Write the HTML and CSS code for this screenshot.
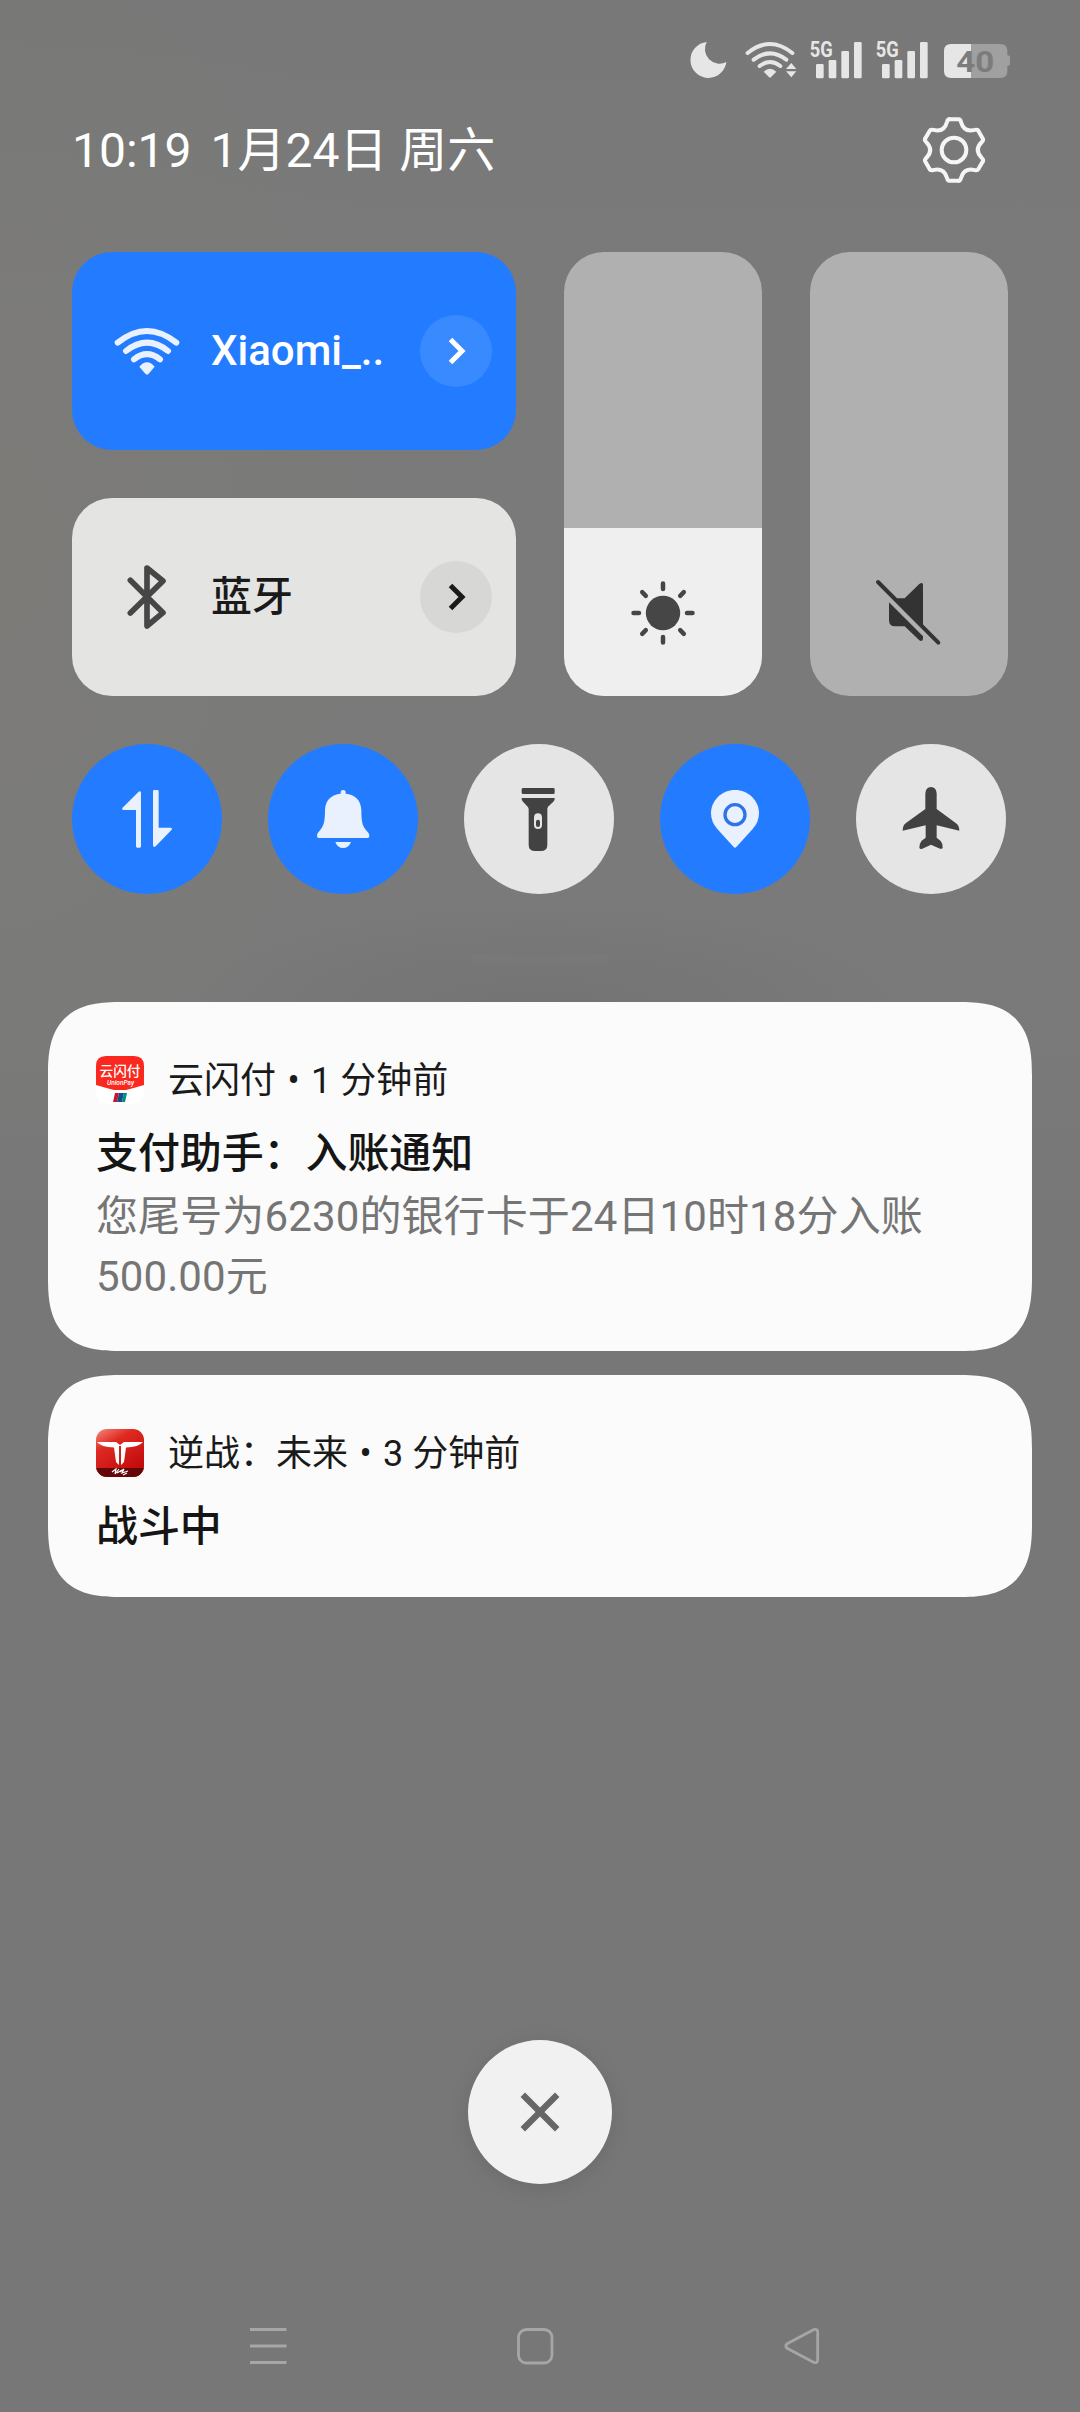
FILE: index.html
```html
<!DOCTYPE html>
<html lang="zh-CN">
<head>
<meta charset="utf-8">
<title>控制中心</title>
<link rel="stylesheet" href="styles.css">
</head>
<body>
<main class="shade">
  <div class="status">
    <svg class="st-moon" width="40" height="40" viewBox="56 60 120 120"><path fill="#e6e6e6" d="M112 66A54 54 0 1 0 171 126A44 44 0 0 1 112 66Z"/></svg>
    <svg class="st-wifi" width="56" height="40" viewBox="222 60 168 120">
      <g fill="none" stroke="#e6e6e6" stroke-width="12" stroke-linecap="round"><path d="M233 99Q300 45 367 99"/><path d="M251 119Q300 81 349 119"/><path d="M269 138Q300 114 331 138"/></g>
      <path fill="#e6e6e6" d="M281 155Q300 138 319 155L300 174ZM348 147H379L364 129ZM348 154H379L364 172Z"/>
    </svg>
    <svg class="st-signal" width="54" height="48" viewBox="417 36 162 144">
      <text class="net" x="419" y="110" textLength="69" lengthAdjust="spacingAndGlyphs">5G</text>
      <g fill="#e6e6e6"><rect x="438" y="132" width="23" height="43" rx="4"/><rect x="476" y="120" width="23" height="55" rx="4"/><rect x="514" y="93" width="23" height="82" rx="4"/><rect x="552" y="66" width="23" height="109" rx="4"/></g>
    </svg>
    <svg class="st-signal" width="54" height="48" viewBox="417 36 162 144">
      <text class="net" x="419" y="110" textLength="69" lengthAdjust="spacingAndGlyphs">5G</text>
      <g fill="#e6e6e6"><rect x="438" y="132" width="23" height="43" rx="4"/><rect x="476" y="120" width="23" height="55" rx="4"/><rect x="514" y="93" width="23" height="82" rx="4"/><rect x="552" y="66" width="23" height="109" rx="4"/></g>
    </svg>
    <svg class="st-battery" width="68" height="40" viewBox="819 60 204 120">
      <path fill="#a0a0a0" d="M903 72H991Q1012 72 1012 93V106Q1020 106 1020 112V132Q1020 138 1012 138V153Q1012 174 991 174H903Z"/>
      <path fill="#e6e6e6" d="M903 72V174H843Q822 174 822 153V93Q822 72 843 72Z"/>
      <text class="level" x="859" y="156" textLength="114" lengthAdjust="spacingAndGlyphs">40</text>
    </svg>
  </div>

  <header class="head">
    <div class="clock"><span>10:19</span><span>1月24日 周六</span></div>
    <svg width="66" height="66" viewBox="-99 -99 198 198">
      <defs><path id="tooth" d="M-14-92H14Q19-92 21-84C27-62 40.2-54.4 62.2-60.2Q70.2-62.5 72.7-58.1"/></defs>
      <g fill="none" stroke="#f5f5f5" stroke-width="12" stroke-linecap="round">
        <use href="#tooth"/><use href="#tooth" transform="rotate(60)"/><use href="#tooth" transform="rotate(120)"/><use href="#tooth" transform="rotate(180)"/><use href="#tooth" transform="rotate(240)"/><use href="#tooth" transform="rotate(300)"/>
        <circle r="37"/>
      </g>
    </svg>
  </header>

  <section class="controls">
    <div class="tiles">
      <div class="tile tile-on">
        <svg width="72" height="72" viewBox="153 225 216 216">
          <g fill="none" stroke="#e9f1ff" stroke-width="18" stroke-linecap="round"><path d="M173 308Q261 238 349 308"/><path d="M198 333Q261 283 324 333"/><path d="M222 358Q261 327 300 358"/></g>
          <path fill="#e9f1ff" d="M238 380Q261 354 284 380L266 401Q261 406 256 401Z"/>
        </svg>
        <span class="tile-name">Xiaomi_..</span>
        <span class="more"><svg width="36" height="36" viewBox="-18 -18 36 36"><path fill="none" stroke="#fff" stroke-width="5" d="M-5.500-11.500L6 0L-5.500 11.500"/></svg></span>
      </div>
      <div class="tile tile-off">
        <svg width="72" height="72" viewBox="153 963 216 216">
          <path fill="none" stroke="#464646" stroke-width="17" stroke-linecap="round" stroke-linejoin="round" d="M211 1021L309 1118L261 1158V984L309 1023L211 1119"/>
        </svg>
        <span class="tile-name cjk">蓝牙</span>
        <span class="more"><svg width="36" height="36" viewBox="-18 -18 36 36"><path fill="none" stroke="#1a1a1a" stroke-width="5" d="M-5.500-11.500L6 0L-5.500 11.500"/></svg></span>
      </div>
    </div>
    <div class="slider">
      <div class="slider-fill">
        <svg width="72" height="72" viewBox="-36 -36 72 72">
          <circle r="17.200" fill="#464646"/>
          <path stroke="#464646" stroke-width="4.500" stroke-linecap="round" d="M0-29.500V-24M0 24V29.500M-29.500 0H-24M24 0H29.500M-20.800-20.800L-17.200-17.200M20.800-20.800L17.200-17.200M-20.800 20.800L-17.200 17.200M20.800 20.800L17.200 17.200"/>
        </svg>
      </div>
    </div>
    <div class="slider">
      <svg class="mute" width="72" height="72" viewBox="969 1010 216 216">
        <path stroke="#333" stroke-width="12" stroke-linecap="round" d="M984 1025L1165 1207"/>
        <path fill="#333" d="M1037 1074H1064L1107 1032Q1119 1023 1119 1034V1158ZM1017 1086L1119 1188V1196Q1117 1205 1108 1200L1064 1158H1035Q1017 1158 1017 1140Z"/>
      </svg>
    </div>
  </section>

  <section class="toggles">
    <div class="toggle on"><svg viewBox="36 42 450 450"><path d="M243 188V349Q243 353 239 353H232Q228 353 228 349V240H190Q184 239 187 234L236 185Q242 181 243 188ZM283 180H292Q296 180 296 184V293H333Q338 295 335 299L287 349Q280 354 279 346V184Q279 180 283 180Z"/></svg></div>
    <div class="toggle on"><svg viewBox="624 42 450 450"><path d="M842 191V187Q842 180 849 180Q857 180 857 187V191C885 193 903 211 904 240C904 280 908 291 925 308Q928 312 928 319Q928 324 923 324H776Q771 324 771 319Q771 312 774 308C790 291 795 280 795 240C796 211 814 193 842 191ZM826 336H873Q866 354 849 354Q833 354 826 336Z"/></svg></div>
    <div class="toggle"><svg viewBox="1212 42 450 450"><path fill-rule="evenodd" d="M1389 174H1480Q1484 174 1484 178V188Q1484 192 1480 192H1389Q1385 192 1385 188V178Q1385 174 1389 174ZM1385 204H1484Q1485 210 1480 215L1464 230Q1462 233 1462 238V344Q1462 363 1442 363H1426Q1406 363 1406 344V238Q1406 233 1403 230L1389 215Q1384 210 1385 204ZM1422 263V284Q1422 297 1434 297Q1446 297 1446 284V263Q1446 250 1434 250Q1422 250 1422 263Z"/><rect x="1428" y="269" width="12" height="22" rx="6"/></svg></div>
    <div class="toggle on"><svg viewBox="360 42 450 450"><path d="M585 180C624 180 657 211 657 250Q657 276 638 297L589 351Q585 355 581 351L532 297Q513 276 513 250C513 211 546 180 585 180Z"/><circle cx="585" cy="254" r="30" fill="none" stroke="#2e74e8" stroke-width="10"/></svg></div>
    <div class="toggle"><svg viewBox="948 42 450 450"><path d="M1156 190Q1158 171 1173 171Q1188 171 1190 190V237L1248 280Q1258 287 1258 302L1190 286V323L1202 333Q1209 341 1208 353Q1206 358 1200 356L1173 344L1147 356Q1140 359 1138 353Q1137 342 1145 332L1157 323V286L1088 302Q1088 286 1098 279L1156 237Z"/></svg></div>
  </section>

  <div class="handle"></div>

  <article class="card">
    <div class="card-head">
      <svg width="48" height="48" viewBox="0 0 48 48">
        <rect width="48" height="48" rx="10" fill="#fff"/>
        <path fill="#fb281f" d="M0 10Q0 0 10 0H38Q48 0 48 10V29Q38 32 30 34H18Q10 32 0 29Z"/>
        <text class="logo-cn" x="3.500" y="19.500" textLength="41" lengthAdjust="spacingAndGlyphs">云闪付</text>
        <text class="logo-en" x="11" y="28.500" textLength="27">UnionPay</text>
        <path fill="#c5172e" d="M19 37H23L21 46H17Z"/><path fill="#164e8c" d="M23 37H28L26 46H21Z"/><path fill="#008b80" d="M28 37H31L29 46H26Z"/>
      </svg>
      <p class="app">云闪付 <span class="dot">•</span> 1 分钟前</p>
    </div>
    <h2 class="title">支付助手：入账通知</h2>
    <p class="text">您尾号为6230的银行卡于24日10时18分入账<br>500.00元</p>
  </article>

  <article class="card card-short">
    <div class="card-head">
      <svg width="48" height="48" viewBox="0 0 48 48">
        <defs>
          <linearGradient id="red" x1="0" y1="0" x2=".6" y2="1"><stop offset="0" stop-color="#f58a7c"/><stop offset=".35" stop-color="#df2a22"/><stop offset="1" stop-color="#c00a0c"/></linearGradient>
          <clipPath id="round"><rect width="48" height="48" rx="11"/></clipPath>
        </defs>
        <g clip-path="url(#round)"><rect width="48" height="48" fill="url(#red)"/><rect y="39" width="48" height="9" fill="#650608"/></g>
        <path fill="#fff" d="M1 13H20L24 16L28 13H47Q43 18 30 18.500L28 33L25 36V17H23V36L20 33L18 18.500Q5 18 1 13Z"/>
        <path fill="none" stroke="#fff" stroke-width="1.200" d="M16 43L20 40L19 45L23 40M21 44L26 41M24 43L28 40L26 44L32 42M27 46L31 44"/>
      </svg>
      <p class="app">逆战：未来 <span class="dot">•</span> 3 分钟前</p>
    </div>
    <h2 class="title">战斗中</h2>
  </article>

  <div class="close"><svg width="48" height="48" viewBox="-24 -24 48 48"><path stroke="#666" stroke-width="6.300" d="M-17.200-17.200L17.200 17.200M17.200-17.200L-17.200 17.200"/></svg></div>

  <nav class="nav">
    <svg width="40" height="40" viewBox="-20 -20 40 40"><path stroke="#a6a6a6" stroke-width="3" d="M-18-16.400H18.500M-18 0H18.500M-18 16.400H18.500"/></svg>
    <svg width="40" height="40" viewBox="-20 -20 40 40"><rect x="-16.500" y="-16.500" width="33.500" height="33.500" rx="8" fill="none" stroke="#a6a6a6" stroke-width="2.800"/></svg>
    <svg width="40" height="40" viewBox="-20 -20 40 40"><path fill="none" stroke="#a6a6a6" stroke-width="2.800" stroke-linejoin="round" d="M-14.500-2.500L12-16.500Q15.500-17.500 15.700-14V14Q15.500 17.500 12 16.500L-14.500 2.500Q-18 0-14.500-2.500Z"/></svg>
  </nav>
</main>
</body>
</html>
```
FILE: styles.css
```css
* { box-sizing: border-box; margin: 0; padding: 0; }

body {
  width: 1080px;
  font-family: Roboto, "Noto Sans CJK SC", sans-serif;
  background: #777;
}

svg { display: block; flex: none; }

.shade {
  display: flex;
  flex-direction: column;
  width: 1080px;
  height: 2412px;
  background:
    radial-gradient(ellipse 380px 110px at 540px 1010px, rgba(0, 0, 0, .06), transparent),
    radial-gradient(ellipse 420px 700px at 0 540px, rgba(130, 126, 110, .18), transparent),
    linear-gradient(#787878, #7a7a7a 12%, #7a7a7a 42%, #777 52%, #777);
}

/* status bar */
.status {
  display: flex;
  align-items: flex-end;
  height: 80px;
  margin-bottom: 20px;
  padding: 0 67px 0 688px;
}
.st-wifi { margin-left: 16px; }
.st-signal { margin-left: 9px; }
.st-signal + .st-signal { margin-left: 12px; }
.st-battery { margin-left: 14px; }
.net { font: 700 64px Roboto, sans-serif; fill: #e6e6e6; }
.level { font: 700 90px Roboto, sans-serif; fill: #7c7c7c; }

/* clock and settings */
.head {
  display: flex;
  align-items: center;
  justify-content: space-between;
  height: 100px;
  padding: 0 93px 0 72px;
}
.clock {
  display: flex;
  align-items: baseline;
  gap: 19px;
  padding-top: 2px;
  font-size: 48px;
  line-height: 60px;
  color: #fff;
}

/* large tiles and sliders */
.controls {
  display: flex;
  gap: 48px;
  height: 444px;
  margin: 52px 72px 0;
}
.tiles {
  display: flex;
  flex-direction: column;
  gap: 48px;
  width: 444px;
}
.tile {
  display: flex;
  align-items: center;
  height: 198px;
  padding: 0 24px 0 39px;
  border-radius: 40px;
}
.tile-on { background: #237cff; color: #fff; }
.tile-off { background: #e4e4e3; color: #1a1a1a; }
.tile-name {
  flex: 1;
  margin-left: 28px;
  font-size: 42px;
  font-weight: 500;
  line-height: 60px;
}
.cjk { font-size: 41px; }
.more {
  display: flex;
  align-items: center;
  justify-content: center;
  width: 72px;
  height: 72px;
  border-radius: 50%;
  background: #3a8aff;
}
.tile-off .more { background: #d7d7d6; }
.slider {
  display: flex;
  flex-direction: column;
  justify-content: flex-end;
  width: 198px;
  border-radius: 40px;
  background: #b0b0b0;
  overflow: hidden;
}
.slider-fill {
  display: flex;
  justify-content: center;
  height: 168px;
  padding-top: 49px;
  background: #efefef;
}
.mute { align-self: center; margin-bottom: 47px; }

/* round toggles */
.toggles {
  display: flex;
  gap: 46px;
  margin: 48px 72px 0;
}
.toggle {
  width: 150px;
  height: 150px;
  border-radius: 50%;
  background: #e5e5e5;
  fill: #424242;
}
.toggle.on { background: #237cff; fill: #e9f1ff; }

.handle {
  width: 140px;
  height: 10px;
  margin: 61px auto 37px;
  border-radius: 5px;
  background: rgba(255, 255, 255, .02);
}

/* notifications */
.card {
  height: 349px;
  margin: 0 48px 24px;
  padding: 54px 48px 0;
  border-radius: 62px;
  background: #fbfbfb;
}
@supports (corner-shape: superellipse(1.45)) {
  .card { border-radius: 74px; corner-shape: superellipse(1.45); }
}
.card-short { height: 222px; margin-bottom: 443px; }
.card-head {
  display: flex;
  align-items: center;
  gap: 24px;
  height: 48px;
}
.app { padding-top: 2px; font-size: 36px; line-height: 48px; color: #1a1a1a; }
.dot { margin: 0 2.5px; }
.title {
  margin-top: 20px;
  font-size: 42px;
  font-weight: 500;
  line-height: 60px;
  letter-spacing: -.1px;
  color: #151515;
}
.text {
  margin-top: 3px;
  font-size: 42px;
  line-height: 60px;
  letter-spacing: .12px;
  color: #757575;
}
.logo-cn { font: 500 13.5px "Noto Sans CJK SC", sans-serif; fill: #fff; }
.logo-en { font: italic 500 6.5px Roboto, sans-serif; fill: #fff; }

/* clear button */
.close {
  display: flex;
  align-items: center;
  justify-content: center;
  width: 144px;
  height: 144px;
  margin: 0 auto;
  border-radius: 50%;
  background: #f1f1f1;
  box-shadow: 0 4px 22px rgba(0, 0, 0, .1);
}

/* system navigation */
.nav {
  display: flex;
  justify-content: space-between;
  margin-top: 142px;
  padding: 0 258px 0 248px;
}
```
